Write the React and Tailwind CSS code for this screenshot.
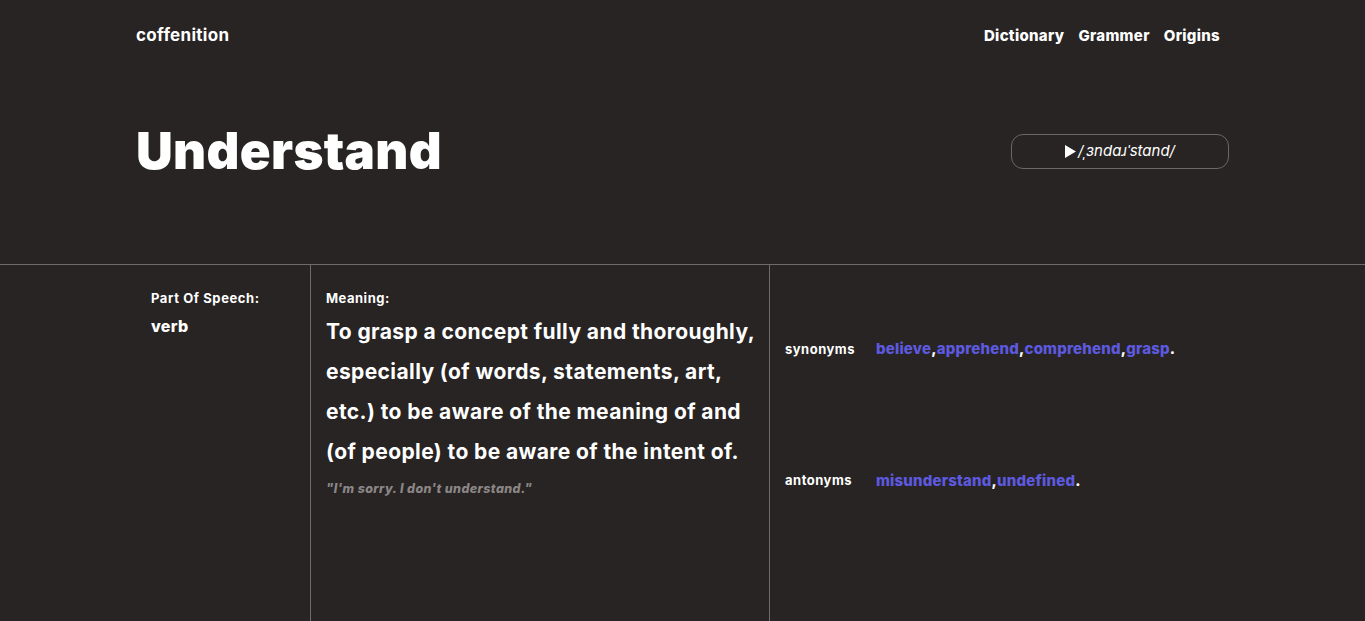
import React from 'react';

const synonyms = ['believe', 'apprehend', 'comprehend', 'grasp'];
const antonyms = ['misunderstand', 'undefined'];

function WordList({ label, words }) {
  return (
    <div className="flex items-center">
      <span className="w-[91px] text-[13px] font-bold tracking-[0.5px] text-white">{label}</span>
      <span className="text-[15px] font-extrabold tracking-[0.2px]">
        {words.map((w, i) => (
          <React.Fragment key={w}>
            <a href="#" className="text-[#5d5ae0]">{w}</a>
            <span className="text-white">{i === words.length - 1 ? '.' : ','}</span>
          </React.Fragment>
        ))}
      </span>
    </div>
  );
}

export default function App() {
  return (
    <div className="min-h-screen bg-[#282423] text-white font-['Inter',sans-serif] overflow-hidden">
      <header className="mx-[136px] flex items-center justify-between pt-[26px] h-[46px]">
        <a href="#" className="text-[17px] font-bold tracking-[0.3px]">coffenition</a>
        <nav className="flex gap-[14px] mr-[9px] text-[15px] font-extrabold tracking-[0.3px]">
          <a href="#">Dictionary</a>
          <a href="#">Grammer</a>
          <a href="#">Origins</a>
        </nav>
      </header>

      <section className="mx-[136px] flex items-center justify-between h-[218px] pt-[6px] pb-[14px]">
        <h1 className="text-[51px] font-black tracking-[0.3px]">Understand</h1>
        <button className="w-[218px] h-[35px] rounded-[12px] border border-[#6b6766] flex items-center justify-center gap-[2px] text-[15px] italic">
          <svg width="11" height="13" viewBox="0 0 11 13"><path d="M0 0L11 6.5L0 13Z" fill="white" /></svg>
          <span>/ˌɜndaɹˈstand/</span>
        </button>
      </section>

      <main className="border-t border-[#6f6b6a] h-[357px]">
        <div className="mx-[136px] flex h-full">
          <div className="w-[175px] px-[15px] pt-[24px] border-r border-[#6f6b6a]">
            <p className="text-[13px] font-bold tracking-[0.6px]">Part Of Speech:</p>
            <p className="text-[16px] font-extrabold tracking-[0.3px] mt-[5px]">verb</p>
          </div>
          <div className="w-[459px] pl-[15px] pt-[24px] border-r border-[#6f6b6a]">
            <p className="text-[13px] font-bold tracking-[0.5px]">Meaning:</p>
            <p className="text-[21px] font-bold tracking-[0.4px] leading-[40px] mt-[3px] whitespace-nowrap">
              To grasp a concept fully and thoroughly,<br />
              especially (of words, statements, art,<br />
              etc.) to be aware of the meaning of and<br />
              (of people) to be aware of the intent of.
            </p>
            <p className="text-[12.5px] font-extrabold italic tracking-[0.4px] text-[#8b8786] mt-[8px]">"I'm sorry. I don't understand."</p>
          </div>
          <div className="flex-1 pl-[15px] pt-[73px] flex flex-col gap-[109px]">
            <WordList label="synonyms" words={synonyms} />
            <WordList label="antonyms" words={antonyms} />
          </div>
        </div>
      </main>
    </div>
  );
}
